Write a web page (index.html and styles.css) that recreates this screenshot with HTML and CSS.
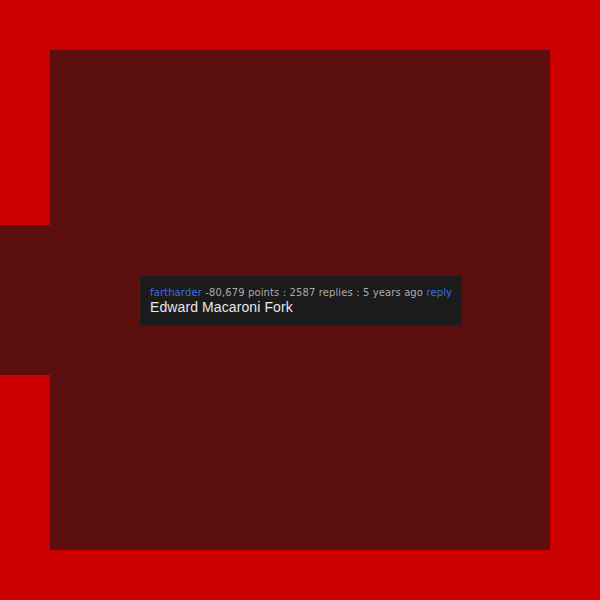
FILE: index.html
```html
<!DOCTYPE html>
<html>
<head>
<meta charset="utf-8">
<link rel="stylesheet" href="styles.css">
</head>
<body>
<div class="stage">
  <div class="side"></div>
  <div class="panel">
    <div class="card">
      <div class="meta"><span class="link">fartharder</span> -80,679 points : 2587 replies : 5 years ago <span class="link">reply</span></div>
      <div class="title">Edward Macaroni Fork</div>
    </div>
  </div>
</div>
</body>
</html>
```

FILE: styles.css
```css
html, body {
  margin: 0;
  padding: 0;
  background: #cc0000;
}
.stage {
  width: 600px;
  height: 600px;
  position: relative;
  display: flex;
  align-items: center;
  justify-content: center;
}
.side {
  position: absolute;
  left: 0;
  top: 225px;
  width: 50px;
  height: 150px;
  background: #5a0e0e;
}
.panel {
  width: 500px;
  height: 500px;
  background: #5a0e0e;
  display: flex;
  align-items: center;
  justify-content: center;
}
.card {
  width: 301px;
  background: #1b1b1b;
  padding: 9px 10px 10px 10px;
  border-left: 1px solid #2a2a2a;
  border-radius: 3px 0 0 3px;
}
.meta {
  font-family: "DejaVu Sans", Verdana, sans-serif;
  font-size: 10px;
  color: #aaaaaa;
  line-height: 13px;
  white-space: nowrap;
  letter-spacing: 0.12px;
  margin-top: 1px;
}
.link {
  color: #3d6fe0;
}
.title {
  font-family: "Liberation Sans", Arial, sans-serif;
  font-size: 14px;
  color: #e8e8e8;
  line-height: 17px;
  letter-spacing: 0.1px;
  margin-bottom: -1px;
}
```
